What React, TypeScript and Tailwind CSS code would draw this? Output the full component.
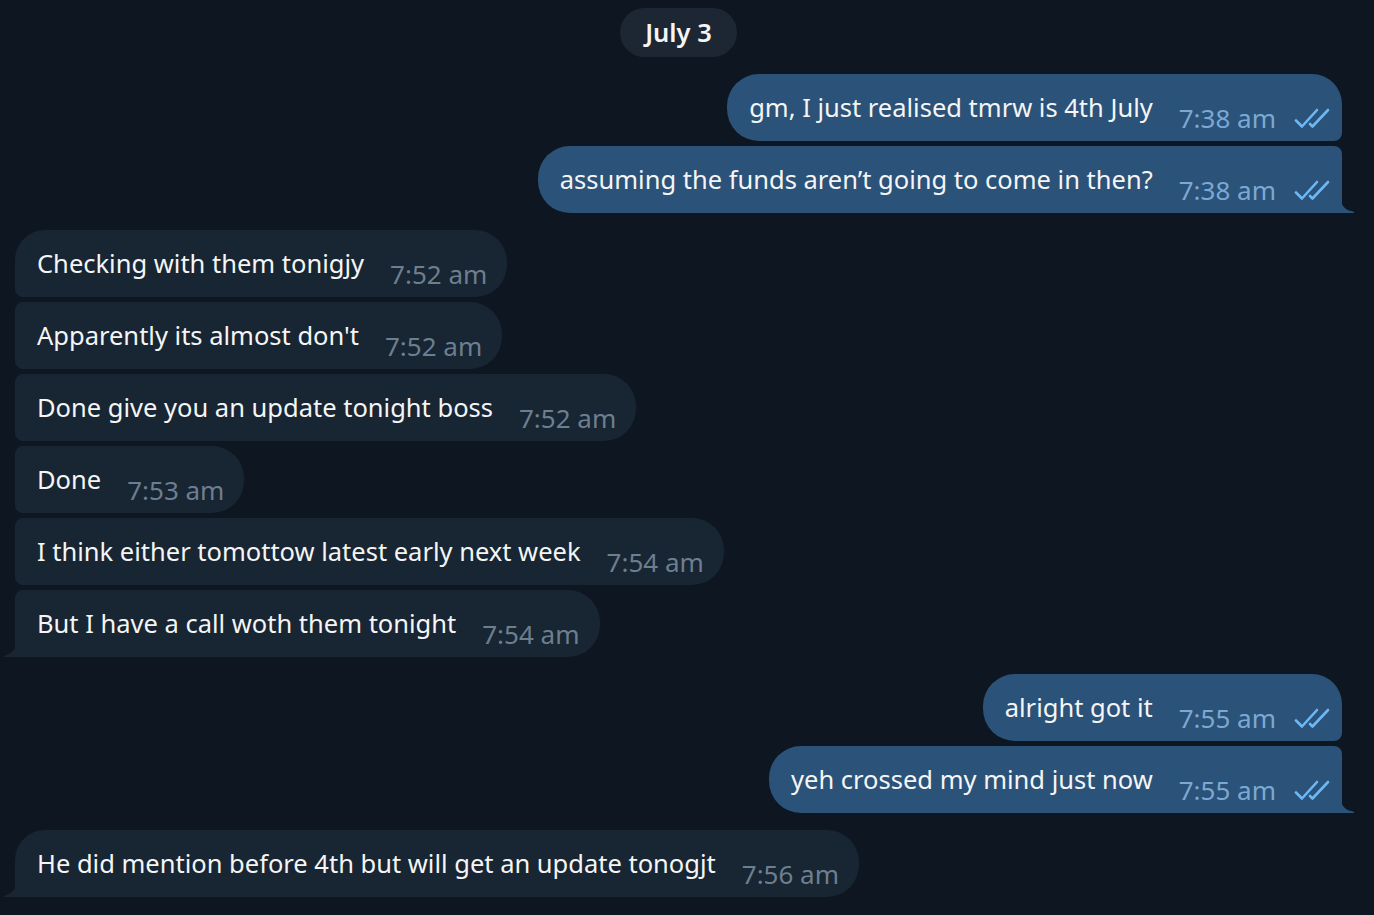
import React from 'react'

type Msg = { text: string; time: string; out: boolean }

const groups: Msg[][] = [
  [
    { text: 'gm, I just realised tmrw is 4th July', time: '7:38 am', out: true },
    { text: 'assuming the funds aren’t going to come in then?', time: '7:38 am', out: true },
  ],
  [
    { text: 'Checking with them tonigjy', time: '7:52 am', out: false },
    { text: "Apparently its almost don't", time: '7:52 am', out: false },
    { text: 'Done give you an update tonight boss', time: '7:52 am', out: false },
    { text: 'Done', time: '7:53 am', out: false },
    { text: 'I think either tomottow latest early next week', time: '7:54 am', out: false },
    { text: 'But I have a call woth them tonight', time: '7:54 am', out: false },
  ],
  [
    { text: 'alright got it', time: '7:55 am', out: true },
    { text: 'yeh crossed my mind just now', time: '7:55 am', out: true },
  ],
  [{ text: 'He did mention before 4th but will get an update tonogjt', time: '7:56 am', out: false }],
]

function Checks() {
  return (
    <svg width="36" height="22" viewBox="0 0 36 22" className="ml-[18px] mt-[34px] shrink-0" fill="none">
      <path d="M2 12.5 L8 18.5 L23 2" stroke="#6cb8f5" strokeWidth="2.6" strokeLinecap="round" strokeLinejoin="round" />
      <path d="M16 16 L18.5 18.5 L34 2" stroke="#6cb8f5" strokeWidth="2.6" strokeLinecap="round" strokeLinejoin="round" />
    </svg>
  )
}

function Bubble({ m, first, last }: { m: Msg; first: boolean; last: boolean }) {
  const radius = m.out
    ? `rounded-l-[32px] ${first ? 'rounded-tr-[30px]' : 'rounded-tr-[8px]'} ${last ? 'rounded-br-none' : 'rounded-br-[8px]'}`
    : `rounded-r-[32px] ${first ? 'rounded-tl-[30px]' : 'rounded-tl-[8px]'} ${last ? 'rounded-bl-none' : 'rounded-bl-[8px]'}`
  return (
    <div className={`relative flex h-[67px] w-fit items-start ${radius} ${m.out ? 'self-end bg-[#2b5278] pl-[22px] pr-[12px]' : 'self-start bg-[#182533] pl-[22px] pr-[20px]'}`}>
      <span className="pt-[17px] text-[25.5px] leading-[32px] text-[#f5f5f5] whitespace-nowrap">{m.text}</span>
      <span className={`ml-[26px] pt-[28px] text-[26px] leading-[32px] whitespace-nowrap ${m.out ? 'text-[#7da8d3]' : 'text-[#6d7f8f]'}`}>
        {m.time}
      </span>
      {m.out && <Checks />}
      {last && m.out && (
        <svg width="14" height="14" viewBox="0 0 14 14" className="absolute bottom-0 right-[-13px]">
          <path d="M0 0 C0.5 7 4 11 12 12.5 Q14 13 13 14 L0 14 Z" fill="#2b5278" />
        </svg>
      )}
      {last && !m.out && (
        <svg width="14" height="18" viewBox="0 0 14 18" className="absolute bottom-0 left-[-12px]">
          <path d="M14 0 C13.5 9 10 14 2 16.5 Q0 17 1 18 L14 18 Z" fill="#182533" />
        </svg>
      )}
    </div>
  )
}

export default function App() {
  return (
    <div className="h-[915px] w-full overflow-hidden bg-[#0e1621]" style={{ fontFamily: '"Noto Sans", "Open Sans", sans-serif' }}>
      <div className="flex w-[1358px] flex-col pl-[15px] pr-[16px] pt-[8px]">
        <div className="self-center rounded-full bg-[#1c2733] px-[25px] py-[8px] text-[25.5px] font-semibold leading-[33px] text-[#f5f5f5]">
          July 3
        </div>
        {groups.map((g, gi) => (
          <div key={gi} className="mt-[17px] flex flex-col gap-[5px]">
            {g.map((m, i) => (
              <Bubble key={i} m={m} first={i === 0} last={i === g.length - 1} />
            ))}
          </div>
        ))}
      </div>
    </div>
  )
}
